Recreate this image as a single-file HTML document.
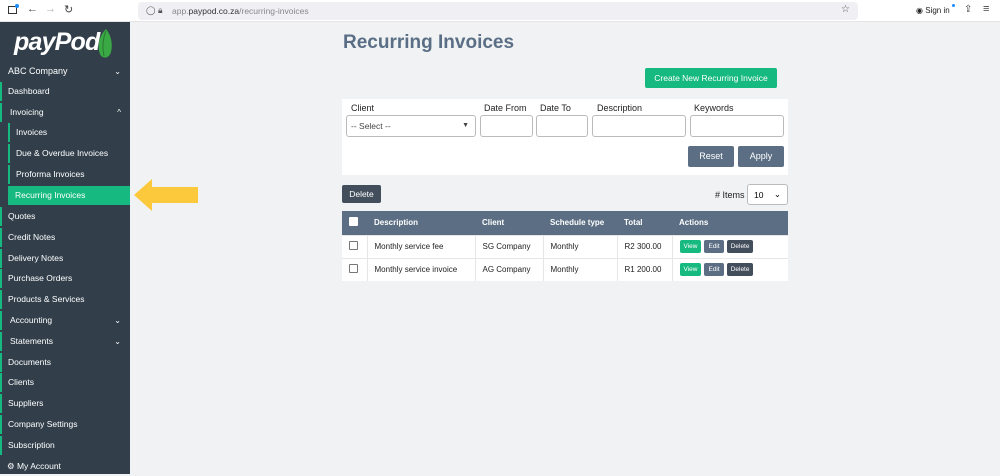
<!DOCTYPE html>
<html><head><style>
*{box-sizing:border-box;margin:0;padding:0}
body{width:1000px;height:474px;overflow:hidden;background:#f1f2f4;font-family:"Liberation Sans",sans-serif;position:relative}
.top{position:absolute;left:0;top:0;width:1000px;height:22px;background:#fff;border-bottom:1px solid #e4e4e4}
.url{position:absolute;left:138px;top:2px;width:720px;height:18px;background:#f0f0f4;border-radius:4px;font-size:8.5px;color:#888;padding:4px 0 0 34px}
.url b{color:#333;font-weight:normal}
.side{position:absolute;left:0;top:22px;width:130px;height:452px;background:#323f4b;color:#fff}
.logo{position:absolute;left:14px;top:6px;font-family:"Liberation Sans",sans-serif;font-style:italic;font-size:25px;font-weight:bold;color:#fff;letter-spacing:-0.8px}
.it{position:absolute;left:0;height:19px;font-size:8.5px;line-height:19px;padding-left:8px;width:130px}
.it.g::before{content:"";position:absolute;left:0;top:0;width:2px;height:19px;background:#16b980}
.it.s{padding-left:16px}
.it.s::before{left:8px}
.chev{position:absolute;right:9px;top:0;font-size:8px}
h1{position:absolute;left:343px;top:32px;font-size:19px;color:#5a6f85;font-weight:bold}
.btn{position:absolute;color:#fff;font-size:8.5px;text-align:center;border-radius:2px}
.card{position:absolute;left:342px;top:99px;width:446px;height:76px;background:#fff}
.lbl{position:absolute;font-size:9px;color:#222;top:4px}
.inp{position:absolute;top:16px;height:22px;border:1px solid #bbb;border-radius:3px;background:#fff;font-size:8.5px;color:#444;padding:5px 0 0 4px}
table{position:absolute;left:342px;top:211px;width:446px;border-collapse:collapse;background:#fff;font-size:8px}
th{background:#5b6e84;color:#fff;text-align:left;height:24px;padding-left:7px;font-weight:bold}
td{height:23px;padding-left:7px;border-top:1px solid #e6e6e6;border-left:1px solid #e6e6e6;color:#222}
td:first-child{border-left:none}
.cb{display:inline-block;width:9px;height:9px;border:1px solid #777;border-radius:1px;background:#fff}
.sb{display:inline-block;color:#fff;font-size:6.5px;padding:3px 4px;border-radius:2px;margin-right:3px}
</style></head><body>
<div class="top">
<div style="position:absolute;left:8px;top:6px;width:9px;height:8px;border:1.5px solid #333"></div>
<div style="position:absolute;left:15px;top:4px;width:4px;height:4px;border-radius:50%;background:#1a8cff"></div>
<div style="position:absolute;left:27px;top:3px;font-size:11px;color:#444">←</div>
<div style="position:absolute;left:45px;top:3px;font-size:11px;color:#aaa">→</div>
<div style="position:absolute;left:64px;top:3px;font-size:11px;color:#444">↻</div>
<div class="url">app.<b>paypod.co.za</b>/recurring-invoices<span style="position:absolute;left:8px;top:3px;color:#555">◯</span><span style="position:absolute;left:20px;top:3px;color:#555">🔒︎</span><span style="position:absolute;right:8px;top:2px;color:#555;font-size:10px">☆</span></div>
<div style="position:absolute;left:916px;top:6px;font-size:8px;color:#222">◉ Sign in</div>
<div style="position:absolute;left:952px;top:4px;width:3px;height:3px;border-radius:50%;background:#1a8cff"></div>
<div style="position:absolute;left:964px;top:4px;font-size:10px;color:#444">⇪</div>
<div style="position:absolute;left:983px;top:3px;font-size:11px;color:#444">≡</div>
</div>
<div class="side">
<div class="logo">payPod</div>
<svg style="position:absolute;left:97px;top:6px" width="16" height="32"><path d="M9 1 C2 8 0 18 3 26 C5 31 12 31 14 24 C16 16 14 7 9 1Z" fill="#3aa845"/><path d="M9 3 C6 10 5 18 7 28" stroke="#2a7a30" stroke-width="1" fill="none"/></svg>
<div class="it" style="top:40px;font-size:9px">ABC Company<span class="chev">⌄</span></div>
<div class="it g" style="top:60px">Dashboard</div>
<div class="it g" style="top:81px;padding-left:10px">Invoicing<span class="chev">^</span></div>
<div class="it g s" style="top:101px">Invoices</div>
<div class="it g s" style="top:122px">Due &amp; Overdue Invoices</div>
<div class="it g s" style="top:143px">Proforma Invoices</div>
<div class="it s" style="top:164px;left:8px;width:122px;padding-left:7px;background:#16b980">Recurring Invoices</div>
<div class="it g" style="top:185px">Quotes</div>
<div class="it g" style="top:206px">Credit Notes</div>
<div class="it g" style="top:227px">Delivery Notes</div>
<div class="it g" style="top:247px">Purchase Orders</div>
<div class="it g" style="top:268px">Products &amp; Services</div>
<div class="it g" style="top:289px;padding-left:10px">Accounting<span class="chev">⌄</span></div>
<div class="it g" style="top:310px;padding-left:10px">Statements<span class="chev">⌄</span></div>
<div class="it g" style="top:331px">Documents</div>
<div class="it g" style="top:351px">Clients</div>
<div class="it g" style="top:372px">Suppliers</div>
<div class="it g" style="top:393px">Company Settings</div>
<div class="it g" style="top:414px">Subscription</div>
<div class="it" style="top:435px;padding-left:7px">⚙ My Account</div>
</div>
<svg style="position:absolute;left:134px;top:179px" width="66" height="32"><polygon points="0,16 18,0 18,8 64,8 64,24 18,24 18,32" fill="#fcc83c"/></svg>
<h1>Recurring Invoices</h1>
<div class="btn" style="left:645px;top:68px;width:132px;height:20px;line-height:20px;background:#16b980">Create New Recurring Invoice</div>
<div class="card">
<div class="lbl" style="left:9px">Client</div>
<div class="inp" style="left:4px;width:130px">-- Select --<span style="position:absolute;right:6px;top:6px;font-size:7px">▼</span></div>
<div class="lbl" style="left:142px">Date From</div><div class="inp" style="left:138px;width:53px"></div>
<div class="lbl" style="left:198px">Date To</div><div class="inp" style="left:194px;width:52px"></div>
<div class="lbl" style="left:255px">Description</div><div class="inp" style="left:250px;width:94px"></div>
<div class="lbl" style="left:352px">Keywords</div><div class="inp" style="left:348px;width:94px"></div>
<div class="btn" style="left:346px;top:47px;width:46px;height:21px;line-height:21px;background:#5b6e84;font-size:9px">Reset</div>
<div class="btn" style="left:396px;top:47px;width:46px;height:21px;line-height:21px;background:#5b6e84;font-size:9px">Apply</div>
</div>
<div class="btn" style="left:342px;top:185px;width:39px;height:18px;line-height:18px;background:#434e5c">Delete</div>
<div style="position:absolute;left:715px;top:190px;font-size:9px;color:#222"># Items</div>
<div style="position:absolute;left:747px;top:184px;width:41px;height:21px;background:#fff;border:1px solid #bbb;border-radius:3px;font-size:8.5px;padding:5px 0 0 6px">10<span style="position:absolute;right:6px;top:4px">⌄</span></div>
<table>
<tr><th style="width:25px"><span class="cb" style="border-color:#fff"></span></th><th style="width:108px">Description</th><th style="width:68px">Client</th><th style="width:74px">Schedule type</th><th style="width:55px">Total</th><th>Actions</th></tr>
<tr><td><span class="cb"></span></td><td>Monthly service fee</td><td>SG Company</td><td>Monthly</td><td>R2 300.00</td><td><span class="sb" style="background:#16b980">View</span><span class="sb" style="background:#5b6e84">Edit</span><span class="sb" style="background:#434e5c">Delete</span></td></tr>
<tr><td><span class="cb"></span></td><td>Monthly service invoice</td><td>AG Company</td><td>Monthly</td><td>R1 200.00</td><td><span class="sb" style="background:#16b980">View</span><span class="sb" style="background:#5b6e84">Edit</span><span class="sb" style="background:#434e5c">Delete</span></td></tr>
</table>
</body></html>
